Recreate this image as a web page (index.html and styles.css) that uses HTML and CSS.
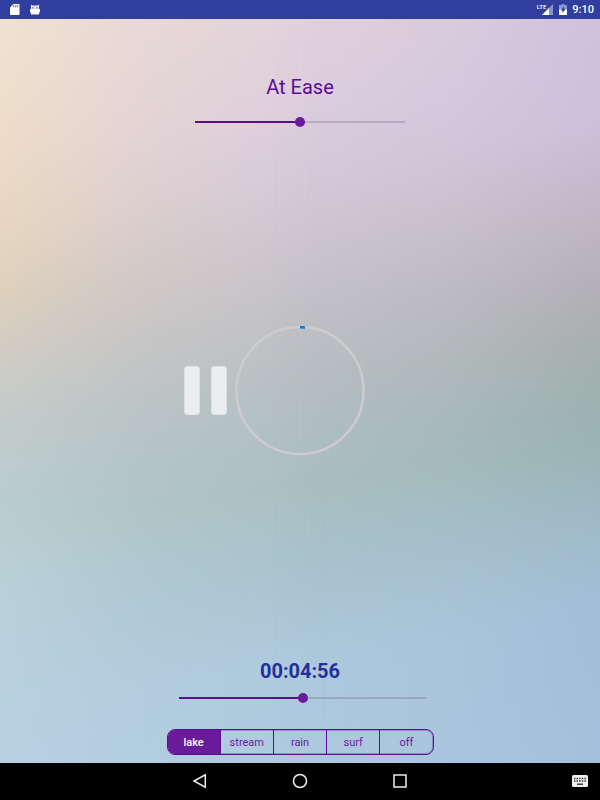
FILE: index.html
```html
<!DOCTYPE html>
<html lang="en">

<head>
    <meta charset="UTF-8">
    <meta name="viewport" content="width=device-width, initial-scale=1.0">
    <title>At Ease</title>
    <link rel="stylesheet" href="styles.css">
</head>

<body>
    <!-- status bar -->
    <header class="status">
        <svg class="icon-sd" width="10" height="11" viewBox="0 0 10 11">
            <path fill="#fff" d="M3.5 0H8.500a1 1 0 0 1 1 1v9a1 1 0 0 1-1 1H1a1 1 0 0 1-1-1V3.500z" />
            <path stroke="#303f9f" stroke-width=".9" d="M3.800 1.300v2M5.800 1.300v2M7.800 1.300v2" />
        </svg>
        <svg class="icon-droid" width="10" height="11" viewBox="0 0 10 11">
            <path fill="#e8eaf6" d="M1 5V2.500L.8.600 2.500 1.500h5L9.200.600 9 2.500V5z" />
            <path fill="#fff" d="M0 5h10v3H9.300v1.500q0 1-1 1H1.700q-1 0-1-1V8H0z" />
            <path fill="#303f9f" d="M2.500 3.200h1.200v1.200H2.500zM6.300 3.200h1.200v1.200H6.300z" />
        </svg>
        <span class="signal">
            <span class="lte">LTE</span>
            <svg width="11" height="11" viewBox="0 0 11 11">
                <path fill="#8c95ca" d="M11 0v11H0z" />
                <path fill="#fff" d="M7 4v7H0z" />
            </svg>
        </span>
        <svg class="icon-battery" width="8" height="11" viewBox="0 0 8 11">
            <path fill="#8c95ca" d="M2.500 0h3v1H8v5H0V1h2.500z" />
            <path fill="#fff" d="M0 5.500h8V11H0z" />
            <path fill="#303f9f" d="M5 2.500 1.800 6.500h1.700v2.500l3-4H5z" />
        </svg>
        <span class="clock">9:10</span>
    </header>

    <main class="player">
        <section class="voice">
            <h1 class="title">At Ease</h1>
            <input class="slider" type="range" min="0" max="100" value="50" aria-label="Voice volume">
        </section>

        <section class="session">
            <button class="pause" type="button" aria-label="Pause">
                <svg width="44" height="50" viewBox="0 0 44 50">
                    <rect x="0.500" y="0.500" width="15" height="48" rx="2.500" />
                    <rect x="27.500" y="0.500" width="15" height="48" rx="2.500" />
                </svg>
            </button>
            <svg class="ring" width="130" height="130" viewBox="0 0 130 130">
                <circle cx="65" cy="64.500" r="63.500" fill="none" stroke="#cccbcd" stroke-width="2.600" />
                <path d="M65 1.300a63.500 63.500 0 0 1 5 .2" fill="none" stroke="#0a78dc" stroke-width="2.600" />
            </svg>
        </section>

        <section class="ambient">
            <p class="time">00:04:56</p>
            <input class="slider slider-wide" type="range" min="0" max="100" value="50" aria-label="Sound volume">
            <div class="sounds">
                <button class="sound active" type="button">lake</button>
                <button class="sound" type="button">stream</button>
                <button class="sound" type="button">rain</button>
                <button class="sound" type="button">surf</button>
                <button class="sound" type="button">off</button>
            </div>
        </section>
    </main>

    <!-- system buttons -->
    <nav class="navbar">
        <div class="keys">
            <button class="key" type="button" aria-label="Back">
                <svg width="16" height="16" viewBox="0 0 16 16">
                    <path d="M13.300 1.800v12.400L2 8z" />
                </svg>
            </button>
            <button class="key" type="button" aria-label="Home">
                <svg width="16" height="16" viewBox="0 0 16 16">
                    <circle cx="8" cy="8" r="6.500" />
                </svg>
            </button>
            <button class="key" type="button" aria-label="Recent apps">
                <svg width="16" height="16" viewBox="0 0 16 16">
                    <path d="M2 2h12v12H2z" />
                </svg>
            </button>
        </div>
        <button class="keyboard" type="button" aria-label="Keyboard">
            <svg width="16" height="12" viewBox="0 0 16 12">
                <rect width="16" height="12" rx="1.500" fill="#eee" />
                <path d="M2 3.500h12M2 6h12" stroke="#222" stroke-width="1.300" stroke-dasharray="1.400 1.200" />
                <path d="M5 9.200h6" stroke="#222" stroke-width="1.300" />
            </svg>
        </button>
    </nav>
</body>

</html>
```
FILE: styles.css
```css
* {
    margin: 0;
    padding: 0;
    box-sizing: border-box;
}

body {
    display: flex;
    flex-direction: column;
    min-height: 100vh;
    font-family: Roboto, "Liberation Sans", sans-serif;
}

button {
    border: none;
    background: none;
    font-family: inherit;
}

svg {
    display: block;
}

/* status bar */
.status {
    display: flex;
    align-items: center;
    height: 19px;
    padding: 0 6px 0 10px;
    background-color: #303f9f;
    color: #fff;
}

.icon-droid {
    margin-left: 10px;
}

.signal {
    display: flex;
    margin-left: auto;
}

.lte {
    margin-right: -4px;
    font-size: 6px;
    font-weight: 500;
    line-height: 6px;
}

.icon-battery {
    margin: 0 5px 0 6px;
}

.clock {
    font-size: 11px;
    font-weight: 500;
    line-height: 19px;
}

/* the backdrop: middle column here, the sides faded in over it */
.player {
    flex: 1;
    display: grid;
    grid-template-rows: 1fr auto 1fr;
    position: relative;
    isolation: isolate;
    background: linear-gradient(172deg, #e2d2dd 5%, #ddcee0 16%, #d5c9da 25%, #cbc5d0 33%, #c1c1c7 41%, #b7bfc2 49%, #abbfc2 61%, #a9c3cd 71%, #aecade 83%, #aecae0 95%);
}

.player::before,
.player::after {
    content: "";
    position: absolute;
    inset: 0;
    z-index: -1;
}

.player::before {
    background: linear-gradient(172deg, #f0e1d1, #eddcc8 14%, #e6d6c0 25%, #dccfbc 34%, #cfccc4 41%, #c3cbca 48%, #b9cccd 58%, #bad0d9 69%, #b8d0e2 90%);
    -webkit-mask-image: linear-gradient(to right, #000, rgba(0, 0, 0, 0.4) 25%, transparent 55%);
    mask-image: linear-gradient(to right, #000, rgba(0, 0, 0, 0.4) 25%, transparent 55%);
}

.player::after {
    background: linear-gradient(172deg, #cfc1dc 10%, #cdbfd8 23%, #c1b7c8 33%, #b4b0b7 42%, #a8afb0 49%, #9cb1af 57%, #9bb3b5 62%, #9fbac7 71%, #a2bdd6 80%, #a4bfdb);
    -webkit-mask-image: linear-gradient(to left, #000, rgba(0, 0, 0, 0.4) 25%, transparent 55%);
    mask-image: linear-gradient(to left, #000, rgba(0, 0, 0, 0.4) 25%, transparent 55%);
}

.voice {
    display: flex;
    flex-direction: column;
    align-items: center;
    gap: 16px;
    padding-top: 56px;
}

.title {
    color: #5c0c96;
    font-size: 20px;
    font-weight: 400;
    line-height: 24px;
}

/* sliders */
.slider {
    -webkit-appearance: none;
    appearance: none;
    width: 35%;
    height: 14px;
    background: linear-gradient(to right, #5c0c96 50%, rgba(90, 80, 110, 0.25) 50%) center / 100% 2px no-repeat;
}

.slider::-webkit-slider-thumb {
    -webkit-appearance: none;
    width: 10px;
    height: 10px;
    border-radius: 50%;
    background-color: #6a1b9a;
}

.slider-wide {
    width: 248px;
    margin: 8px 0 24px 6px;
}

/* pause and progress */
.session {
    display: grid;
    grid-template-columns: 1fr auto 1fr;
    align-items: center;
    column-gap: 7px;
}

.pause {
    justify-self: end;
    fill: #ebeef0;
    stroke: #dce1e4;
}

.ambient {
    display: flex;
    flex-direction: column;
    align-items: center;
    align-self: end;
    padding-bottom: 8px;
}

.time {
    color: #24309a;
    font-size: 20px;
    font-weight: 700;
    line-height: 24px;
}

.sounds {
    display: flex;
    width: 267px;
    height: 26px;
    border: 1px solid #5c0c96;
    border-radius: 8px;
    box-shadow: inset 0 0 0 1px rgba(92, 12, 150, 0.3);
    overflow: hidden;
}

.sound {
    flex: 1;
    border-left: 1px solid #5c0c96;
    color: #6a1b9a;
    font-size: 11px;
}

.sound:first-child {
    border-left: none;
}

.sound.active {
    background-color: #6a1b9a;
    color: #fff;
    font-weight: 500;
}

/* system buttons */
.navbar {
    display: grid;
    grid-template-columns: 1fr auto 1fr;
    align-items: center;
    height: 37px;
    padding: 0 12px 1px;
    background-color: #000;
}

.keys {
    display: flex;
    grid-column: 2;
    gap: 84px;
}

.key {
    fill: none;
    stroke: #eee;
    stroke-width: 1.5px;
}

.keyboard {
    justify-self: end;
}
```
